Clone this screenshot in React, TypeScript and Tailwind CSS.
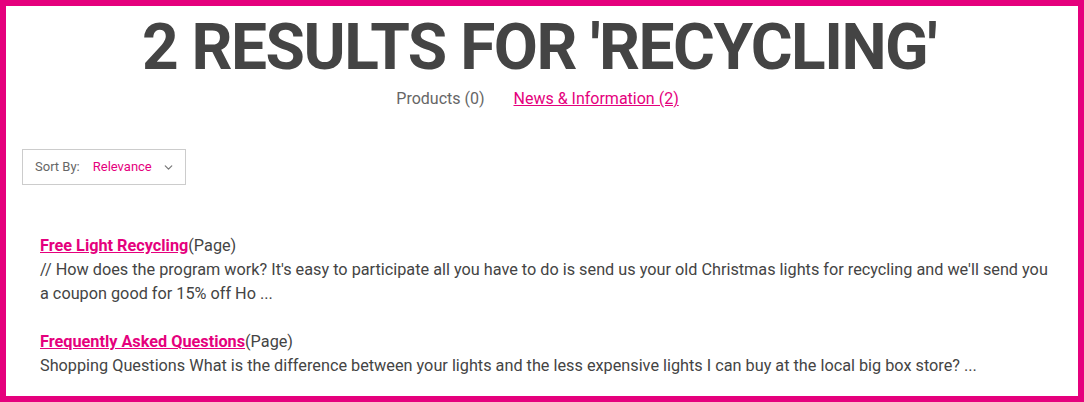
import { ChevronDown } from 'lucide-react';

const results = [
    {
        title: 'Free Light Recycling',
        text: "// How does the program work? It's easy to participate all you have to do is send us your old Christmas lights for recycling and we'll send you a coupon good for 15% off Ho ...",
    },
    {
        title: 'Frequently Asked Questions',
        text: 'Shopping Questions What is the difference between your lights and the less expensive lights I can buy at the local big box store? ...',
    },
];

export default function App() {
    return (
        <div className="h-[402px] w-[1084px] border-[6px] border-[#e5007d] bg-white font-['Roboto',sans-serif] text-[#444]">
            <h1 className="mt-[4px] pr-[6px] text-center text-[64px] font-bold uppercase leading-[76px] tracking-[-1.5px] text-[#444]">
                2 Results for 'Recycling'
            </h1>
            <div className="mt-[3px] flex justify-center gap-[29px] pr-[9px] text-[16px] leading-[20px]">
                <span className="text-[#666]">Products (0)</span>
                <a href="#" className="text-[#e5007d] underline">News &amp; Information (2)</a>
            </div>
            <div className="ml-[16px] mt-[40px] flex h-[36px] w-[164px] items-center border border-[#ccc] pl-[12px] text-[13px]">
                <span className="text-[#666]">Sort By:</span>
                <span className="ml-[13px] text-[#e5007d]">Relevance</span>
                <ChevronDown className="ml-[10px] h-[13px] w-[13px] text-[#777]" strokeWidth={2.25} />
            </div>
            <div className="ml-[34px] mt-[49px] flex w-[1020px] flex-col gap-[24px] text-[16.25px] leading-[24px]">
                {results.map((r) => (
                    <div key={r.title}>
                        <div>
                            <a href="#" className="font-bold text-[#e5007d] underline">{r.title}</a>
                            <span>(Page)</span>
                        </div>
                        <p>{r.text}</p>
                    </div>
                ))}
            </div>
        </div>
    );
}
